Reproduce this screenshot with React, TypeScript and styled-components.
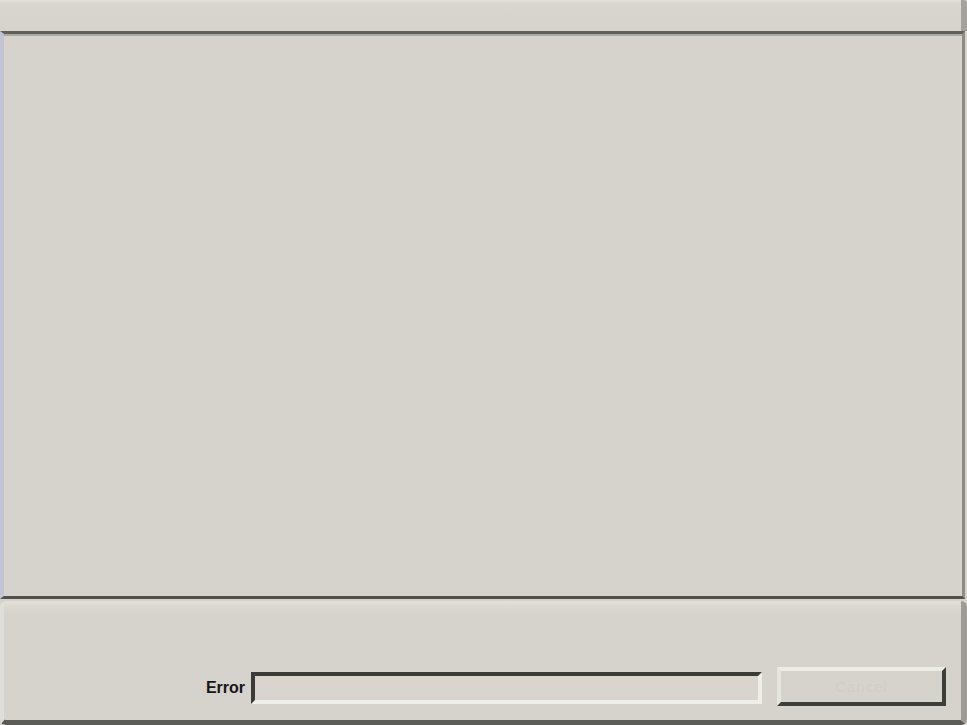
import styled, { createGlobalStyle } from "styled-components";

const GlobalStyle = createGlobalStyle`
  html, body {
    margin: 0;
    padding: 0;
    background: #d6d2cc;
  }
  body {
    font-family: "Liberation Sans", Arial, sans-serif;
  }
`;

const Window = styled.div`
  width: 967px;
  height: 725px;
  display: flex;
  flex-direction: column;
  background: #d6d2cc;
  overflow: hidden;
  box-sizing: border-box;
`;

const TopBar = styled.div`
  height: 31px;
  flex: none;
  box-sizing: border-box;
  background: linear-gradient(#e3e0da 0px, #d9d5cf 4px, #d6d2cc 100%);
  border-right: 6px solid #a4a19c;
  border-top-right-radius: 4px;
`;

const MainPanel = styled.div`
  flex: 1;
  box-sizing: border-box;
  background: #d6d2cc;
  border-top: 3px solid #5f5f5b;
  border-left: 4px solid #c4c3d3;
  border-right: 3px solid #8e8c88;
  border-bottom: 3px solid #4f4f4b;
  margin-right: 2px;
  box-shadow: inset 0 2px 0 #a9a8a3;
`;

const BottomPanel = styled.div`
  height: 124px;
  flex: none;
  box-sizing: border-box;
  margin-top: 2px;
  background: linear-gradient(#e2e0d8 0px, #dbd8d1 6px, #d6d2cc 14px);
  border-left: 4px solid #e0ded8;
  border-right: 6px solid #9e9b97;
  border-bottom: 5px solid #5c5c58;
  border-radius: 6px;
  display: flex;
  align-items: flex-end;
  justify-content: flex-end;
  padding: 0 15px 14px 0;
`;

const Row = styled.div`
  display: flex;
  align-items: center;
`;

const Label = styled.span`
  font-size: 16px;
  font-weight: bold;
  color: #161616;
  margin-right: 6px;
  margin-top: 2px;
`;

const Field = styled.div`
  width: 511px;
  height: 32px;
  box-sizing: border-box;
  background: #d9d5ce;
  border-style: solid;
  border-width: 4px;
  border-color: #3b3b37 #f0eee8 #f0eee8 #3b3b37;
  margin-top: 3px;
`;

const Button = styled.div`
  width: 169px;
  height: 39px;
  box-sizing: border-box;
  margin-left: 15px;
  background: #d6d2cc;
  border-style: solid;
  border-width: 4px;
  border-color: #edebe5 #3e3e3a #3e3e3a #e6e4de;
  display: flex;
  align-items: center;
  justify-content: center;
  font-size: 15px;
  color: #d2cec6;
  letter-spacing: 1px;
`;

export default function App() {
  return (
    <>
      <GlobalStyle />
      <Window>
        <TopBar />
        <MainPanel />
        <BottomPanel>
          <Row>
            <Label>Error</Label>
            <Field />
            <Button>Cancel</Button>
          </Row>
        </BottomPanel>
      </Window>
    </>
  );
}
